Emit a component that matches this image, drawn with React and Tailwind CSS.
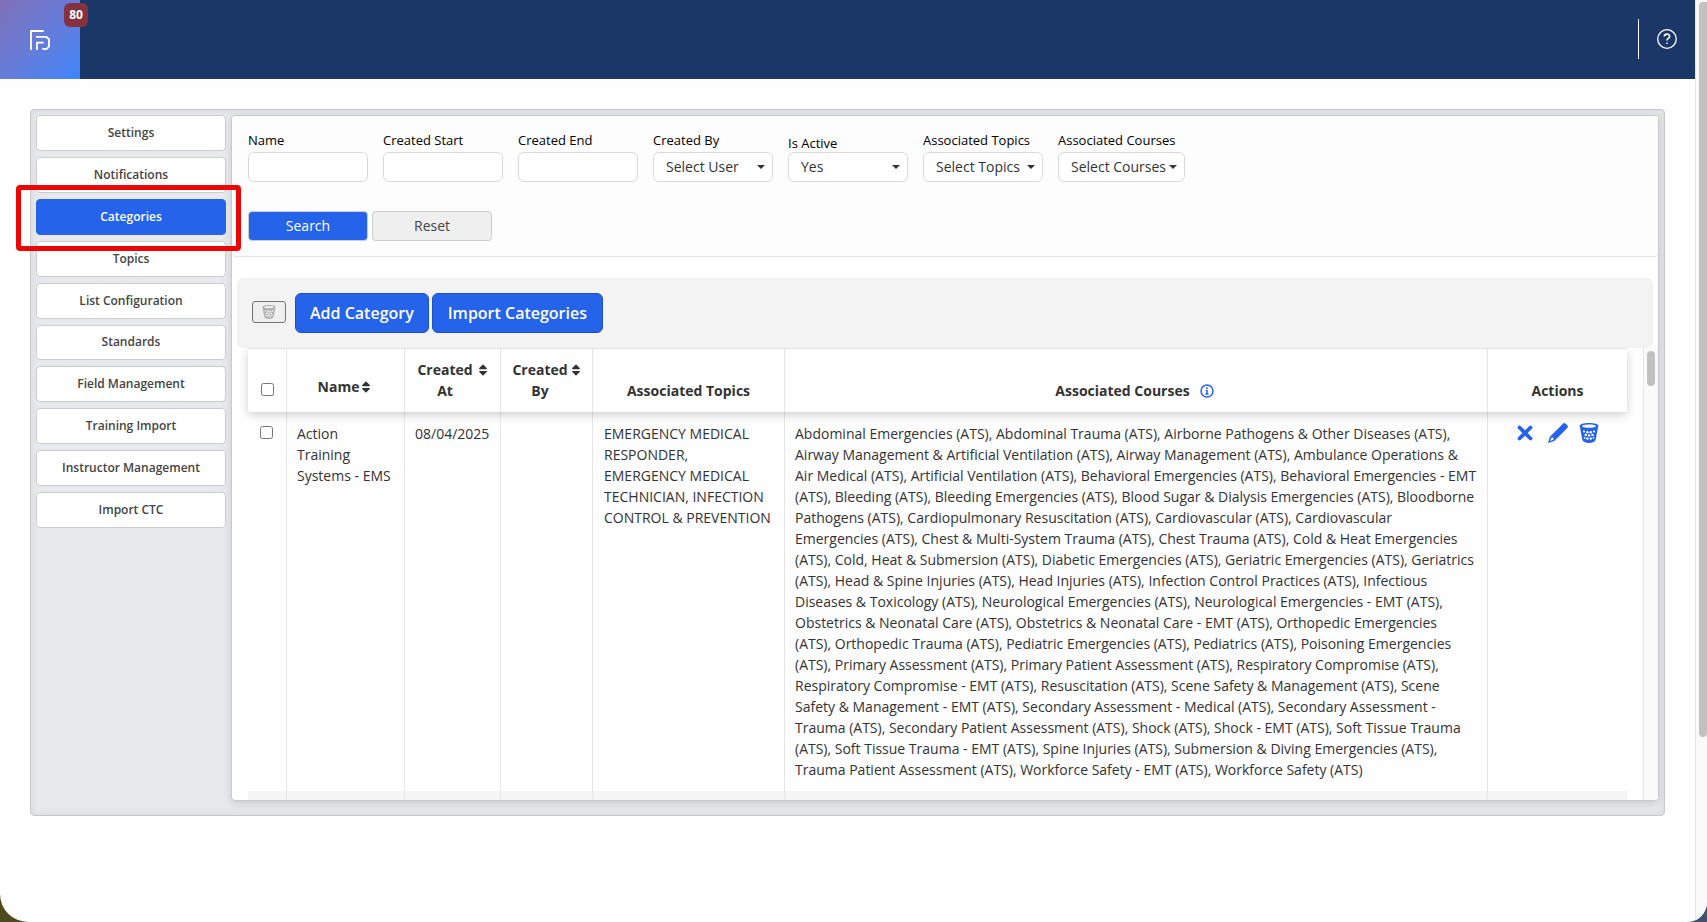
import React from 'react';
import { FaSort } from 'react-icons/fa';

const navItems = [
  'Settings',
  'Notifications',
  'Categories',
  'Topics',
  'List Configuration',
  'Standards',
  'Field Management',
  'Training Import',
  'Instructor Management',
  'Import CTC',
];

const courses = `Abdominal Emergencies (ATS), Abdominal Trauma (ATS), Airborne Pathogens & Other Diseases (ATS), Airway Management & Artificial Ventilation (ATS), Airway Management (ATS), Ambulance Operations & Air Medical (ATS), Artificial Ventilation (ATS), Behavioral Emergencies (ATS), Behavioral Emergencies - EMT (ATS), Bleeding (ATS), Bleeding Emergencies (ATS), Blood Sugar & Dialysis Emergencies (ATS), Bloodborne Pathogens (ATS), Cardiopulmonary Resuscitation (ATS), Cardiovascular (ATS), Cardiovascular Emergencies (ATS), Chest & Multi-System Trauma (ATS), Chest Trauma (ATS), Cold & Heat Emergencies (ATS), Cold, Heat & Submersion (ATS), Diabetic Emergencies (ATS), Geriatric Emergencies (ATS), Geriatrics (ATS), Head & Spine Injuries (ATS), Head Injuries (ATS), Infection Control Practices (ATS), Infectious Diseases & Toxicology (ATS), Neurological Emergencies (ATS), Neurological Emergencies - EMT (ATS), Obstetrics & Neonatal Care (ATS), Obstetrics & Neonatal Care - EMT (ATS), Orthopedic Emergencies (ATS),\u00a0Orthopedic Trauma (ATS), Pediatric Emergencies (ATS), Pediatrics (ATS), Poisoning Emergencies (ATS), Primary Assessment (ATS), Primary Patient Assessment (ATS), Respiratory Compromise (ATS), Respiratory Compromise - EMT (ATS), Resuscitation (ATS), Scene Safety & Management (ATS), Scene Safety & Management - EMT (ATS), Secondary Assessment - Medical (ATS), Secondary Assessment - Trauma (ATS), Secondary Patient Assessment (ATS), Shock (ATS), Shock - EMT (ATS), Soft Tissue Trauma (ATS), Soft Tissue Trauma - EMT (ATS), Spine Injuries (ATS), Submersion & Diving Emergencies (ATS), Trauma Patient Assessment (ATS), Workforce Safety - EMT (ATS), Workforce Safety (ATS)`;

const BasketIcon = ({ className }) => (
  <svg viewBox="0 0 20 20" className={className} fill="currentColor" aria-hidden="true">
    <path
      fillRule="evenodd"
      d="M10 0C4.600 0 .6 1.200.6 3c0 .3.1.6.3.9l2.400 12.600C3.700 18.800 6.300 20 10 20s6.300-1.200 6.700-3.500l2.400-12.600c.2-.3.3-.6.3-.9C19.400 1.200 15.400 0 10 0Zm0 1.600c4.200 0 6.900.8 6.900 1.600S14.200 4.800 10 4.800 3.100 4 3.100 3.200 5.800 1.600 10 1.600Z"
    />
    <g className="fill-white">
      <circle cx="5" cy="8.500" r="1.100" />
      <circle cx="8.400" cy="9.200" r="1.200" />
      <circle cx="11.800" cy="9.200" r="1.200" />
      <circle cx="15" cy="8.500" r="1.100" />
      <circle cx="6.700" cy="11.900" r="1.200" />
      <circle cx="10.100" cy="12.400" r="1.200" />
      <circle cx="13.500" cy="11.900" r="1.200" />
      <circle cx="5.700" cy="14.800" r=".9" />
      <circle cx="8.400" cy="15.600" r="1.200" />
      <circle cx="11.800" cy="15.600" r="1.200" />
      <circle cx="14.400" cy="14.800" r=".9" />
    </g>
  </svg>
);

const Caret = () => (
  <svg viewBox="0 0 8 4" className="pointer-events-none absolute right-2 top-[13px] h-1 w-2" fill="#333" aria-hidden="true">
    <path d="M0 0h8L4 4z" />
  </svg>
);

const TextField = ({ id, label }) => (
  <div className="flex w-[120px] flex-col">
    <label htmlFor={id} className="mb-[3px] text-[13px] leading-[18px] text-black">{label}</label>
    <input id={id} type="text" className="h-[30px] rounded-md border border-[#d9d9d9] bg-white px-3 text-sm" />
  </div>
);

const SelectField = ({ id, label, value, low, wide }) => (
  <div className={`flex flex-col ${wide ? 'w-[127px]' : 'w-[120px]'}`}>
    <label htmlFor={id} className={`text-[13px] leading-[18px] whitespace-nowrap text-black ${low ? '' : 'mb-[3px]'}`}>{label}</label>
    <div className="relative">
      <select id={id} className="h-[30px] w-full appearance-none rounded-md border border-[#d9d9d9] bg-white pl-3 text-sm text-[#333]">
        <option>{value}</option>
      </select>
      <Caret />
    </div>
  </div>
);

const App = () => {
  return (
    <div className="h-screen bg-gradient-to-r from-[#4d4a1c] to-[#40536e] font-['Open_Sans',sans-serif] text-[#333]">
      <div className="flex h-full overflow-hidden rounded-br-[20px] rounded-bl-[28px] bg-[#fefefe]">
        <div className="min-w-0 flex-1">
          {/* Header */}
          <header className="flex h-[79px] items-center justify-between bg-[#1b3768]">
            <a href="#" aria-label="Home" className="relative flex h-full w-20 items-center justify-center bg-gradient-to-br from-[#7f6fb8] to-[#3a86fb] text-white">
              <svg viewBox="0 0 20 20" className="h-5 w-5" fill="none" stroke="currentColor" strokeWidth="1.800" strokeLinejoin="round" aria-hidden="true">
                <path d="M1 20V1h12.700" />
                <path d="M6 6.800h10.200L19 9.200v7.200L16.600 19h-4.300" />
                <path d="M6.900 20v-7.300h6.800" />
              </svg>
              <span className="absolute -right-2 top-[3px] flex h-6 w-6 items-center justify-center rounded-md bg-[#85313f] text-xs font-bold">80</span>
            </a>
            <div className="mr-[18px] flex items-center gap-[18px] pb-0.5 text-white">
              <span className="h-10 w-px bg-white" />
              <button type="button" aria-label="Help">
                <svg viewBox="0 0 20 20" className="h-5 w-5" fill="none" stroke="currentColor" strokeWidth="1.300" aria-hidden="true">
                  <circle cx="10" cy="10" r="9.300" />
                  <path d="M7.300 7.600c.1-3.300 5.300-3.200 5.300-.2 0 2-2.600 2-2.600 4.200" strokeWidth="1.600" />
                  <circle cx="10" cy="14.200" r=".6" strokeWidth=".8" />
                </svg>
              </button>
            </div>
          </header>

          <div className="mx-[30px] mt-[30px] flex rounded border border-[#c8c9cb] bg-[#e8e9ed] px-[5px] pt-[5px] pb-[14px] shadow-[inset_0_0_8px_rgba(0,0,0,0.08)]">
            {/* Section menu */}
            <nav className="mr-[5px] flex h-[413px] w-[190px] shrink-0 flex-col gap-[6px]">
              {navItems.map((item) => {
                const active = item === 'Categories';
                return (
                  <div key={item} className="relative flex flex-1 flex-col">
                    <button
                      type="button"
                      className={`flex-1 rounded border text-xs font-semibold ${
                        active ? 'border-[#2563eb] bg-[#2563eb] text-white' : 'border-[#ccc] bg-white text-[#444]'
                      }`}
                    >
                      {item}
                    </button>
                    {active && (
                      <div className="pointer-events-none absolute -inset-x-5 -top-[14px] -bottom-4 z-10 mr-[5px] rounded border-[5px] border-[#ec0707]" />
                    )}
                  </div>
                );
              })}
            </nav>

            <main className="min-w-0 flex-1 overflow-hidden rounded border border-[#c8c9cb] bg-[#fefefe] shadow-[0_3px_8px_rgba(0,0,0,0.12)]">
              {/* Filters */}
              <form className="rounded-b border-b border-[#e5e5e5] bg-[#fdfdfd] px-4 pt-[15px] pb-[15px]">
                <div className="flex items-end gap-[15px]">
                  <TextField id="name" label="Name" />
                  <TextField id="created-start" label="Created Start" />
                  <TextField id="created-end" label="Created End" />
                  <SelectField id="created-by" label="Created By" value="Select User" />
                  <SelectField id="is-active" label="Is Active" value="Yes" low />
                  <SelectField id="topics" label="Associated Topics" value="Select Topics" />
                  <SelectField id="courses" label="Associated Courses" value="Select Courses" wide />
                </div>
                <div className="mt-[29px] flex gap-1">
                  <button type="button" className="h-[30px] w-[120px] rounded border border-[#ccc] bg-[#2563eb] text-sm text-white">Search</button>
                  <button type="button" className="h-[30px] w-[120px] rounded border border-[#ccc] bg-[#efefef] text-sm text-[#444]">Reset</button>
                </div>
              </form>

              {/* Toolbar */}
              <div className="mx-[5px] mt-[21px] flex h-[70px] items-center rounded-md bg-[#f3f3f3] pl-[15px]">
                <button type="button" disabled aria-label="Delete selected" className="mr-[9px] mb-0.5 flex h-[22px] w-[34px] items-center justify-center rounded-[3px] border border-[#767676] bg-[#efefef] text-[#b0b0b0]">
                  <BasketIcon className="h-[14px] w-[14px]" />
                </button>
                <button type="button" className="mr-[3px] h-10 rounded-md border border-[#1d50c4] bg-[#2563eb] px-[14px] text-base font-semibold text-white">Add Category</button>
                <button type="button" className="h-10 rounded-md border border-[#1d50c4] bg-[#2563eb] px-[15px] text-base font-semibold text-white">Import Categories</button>
              </div>

              {/* Categories table */}
              <div className="flex h-[452px] overflow-hidden">
                <div className="min-w-0 flex-1 px-4">
                  <table className="w-full table-fixed border-separate border-spacing-0 text-sm leading-[21px]">
                    <colgroup>
                      <col className="w-[38px]" />
                      <col className="w-[118px]" />
                      <col className="w-[96px]" />
                      <col className="w-[92px]" />
                      <col className="w-[192px]" />
                      <col />
                      <col className="w-[140px]" />
                    </colgroup>
                    <thead className="relative z-10 rounded bg-white font-bold shadow-[0_3px_10px_rgba(0,0,0,0.18)]">
                      <tr className="h-[64px] align-bottom">
                        <th className="border-t border-[#e5e5e5] pb-4">
                          <input type="checkbox" aria-label="Select all" className="mx-auto block h-[13px] w-[13px]" />
                        </th>
                        <th className="border-t border-l border-[#e5e5e5] pb-[15px]">
                          <span className="flex items-center justify-center">Name<FaSort className="h-[14px] w-[14px]" /></span>
                        </th>
                        <th className="border-t border-l border-[#e5e5e5] pb-[11px] pl-0.5">
                          <span className="flex justify-center gap-[3px]"><span>Created<br />At</span><FaSort className="mt-1 h-[14px] w-[14px]" /></span>
                        </th>
                        <th className="border-t border-l border-[#e5e5e5] pb-[11px] pl-0.5">
                          <span className="flex justify-center gap-px"><span>Created<br />By</span><FaSort className="mt-1 h-[14px] w-[14px]" /></span>
                        </th>
                        <th className="border-t border-l border-[#e5e5e5] pb-[11px]">Associated Topics</th>
                        <th className="border-t border-l border-[#e5e5e5] pr-[3px] pb-[11px]">
                          <span className="flex items-center justify-center gap-[10px]">
                            Associated Courses
                            <svg viewBox="0 0 14 14" className="h-[14px] w-[14px] text-[#2563eb]" fill="none" stroke="currentColor" strokeWidth="1.500" aria-hidden="true">
                              <circle cx="7" cy="7" r="6" />
                              <path d="M5.800 6.500H7v3.600M5.500 10.100h3M7 3.300v1.600" strokeWidth="1.500" />
                            </svg>
                          </span>
                        </th>
                        <th className="border-t border-l border-[#e5e5e5] pb-[11px]">Actions</th>
                      </tr>
                    </thead>
                    <tbody>
                      <tr className="align-top">
                        <td className="pt-[14px] pr-0.5">
                          <input type="checkbox" aria-label="Select Action Training Systems - EMS" className="mx-auto block h-[13px] w-[13px]" />
                        </td>
                        <td className="border-l border-[#e5e5e5] px-[10px] py-[11px]">Action Training Systems - EMS</td>
                        <td className="border-l border-[#e5e5e5] px-[10px] py-[11px]">08/04/2025</td>
                        <td className="border-l border-[#e5e5e5] px-[10px] py-[11px]" />
                        <td className="border-l border-[#e5e5e5] py-[11px] pr-3 pl-[11px]">
                          EMERGENCY MEDICAL RESPONDER, EMERGENCY MEDICAL TECHNICIAN, INFECTION CONTROL &amp; PREVENTION
                        </td>
                        <td className="border-l border-[#e5e5e5] px-[10px] py-[11px]">{courses}</td>
                        <td className="border-l border-[#e5e5e5] py-[11px]">
                          <div className="flex items-center justify-center gap-[11px] text-[#2563eb]">
                            <button type="button" aria-label="Deactivate" className="mr-1">
                              <svg viewBox="0 0 16 16" className="h-4 w-4" fill="none" stroke="currentColor" strokeWidth="3.800" strokeLinecap="round" aria-hidden="true">
                                <path d="m2.500 2.500 11 11M13.500 2.500l-11 11" />
                              </svg>
                            </button>
                            <button type="button" aria-label="Edit">
                              <svg viewBox="0 0 20 20" className="h-5 w-5" fill="currentColor" aria-hidden="true">
                                <path fillRule="evenodd" d="M12.700 2.900 15 .7c.8-.8 1.900-.8 2.700 0l1.600 1.600c.8.8.8 1.900 0 2.700L17.100 7.300 6.300 18.100 0 20l1.900-6.300zM3.300 14.700l-1.200 3.200 3.200-1.200.3-1.100-1.200-1.200z" />
                              </svg>
                            </button>
                            <button type="button" aria-label="Delete">
                              <BasketIcon className="h-5 w-5" />
                            </button>
                          </div>
                        </td>
                      </tr>
                      <tr className="h-10 bg-[#f5f5f5]">
                        <td />
                        <td className="border-l border-[#e5e5e5]" />
                        <td className="border-l border-[#e5e5e5]" />
                        <td className="border-l border-[#e5e5e5]" />
                        <td className="border-l border-[#e5e5e5]" />
                        <td className="border-l border-[#e5e5e5]" />
                        <td className="border-l border-[#e5e5e5]" />
                      </tr>
                    </tbody>
                  </table>
                </div>
                <div className="w-[15px] shrink-0 border-l border-[#e5e5e5] bg-[#fafafa] pt-[3px]">
                  <div className="mx-auto h-[35px] w-2 rounded-full bg-[#c1c1c1]" />
                </div>
              </div>
            </main>
          </div>
        </div>

        {/* Page scroll track */}
        <div className="w-3 shrink-0 border-l border-[#e5e5e5] bg-[#fafafa] pt-[2px] pl-[3px]">
          <div className="h-[735px] rounded-l-md rounded-br-md bg-[#c1c1c1]" />
        </div>
      </div>
    </div>
  );
};

export default App;
